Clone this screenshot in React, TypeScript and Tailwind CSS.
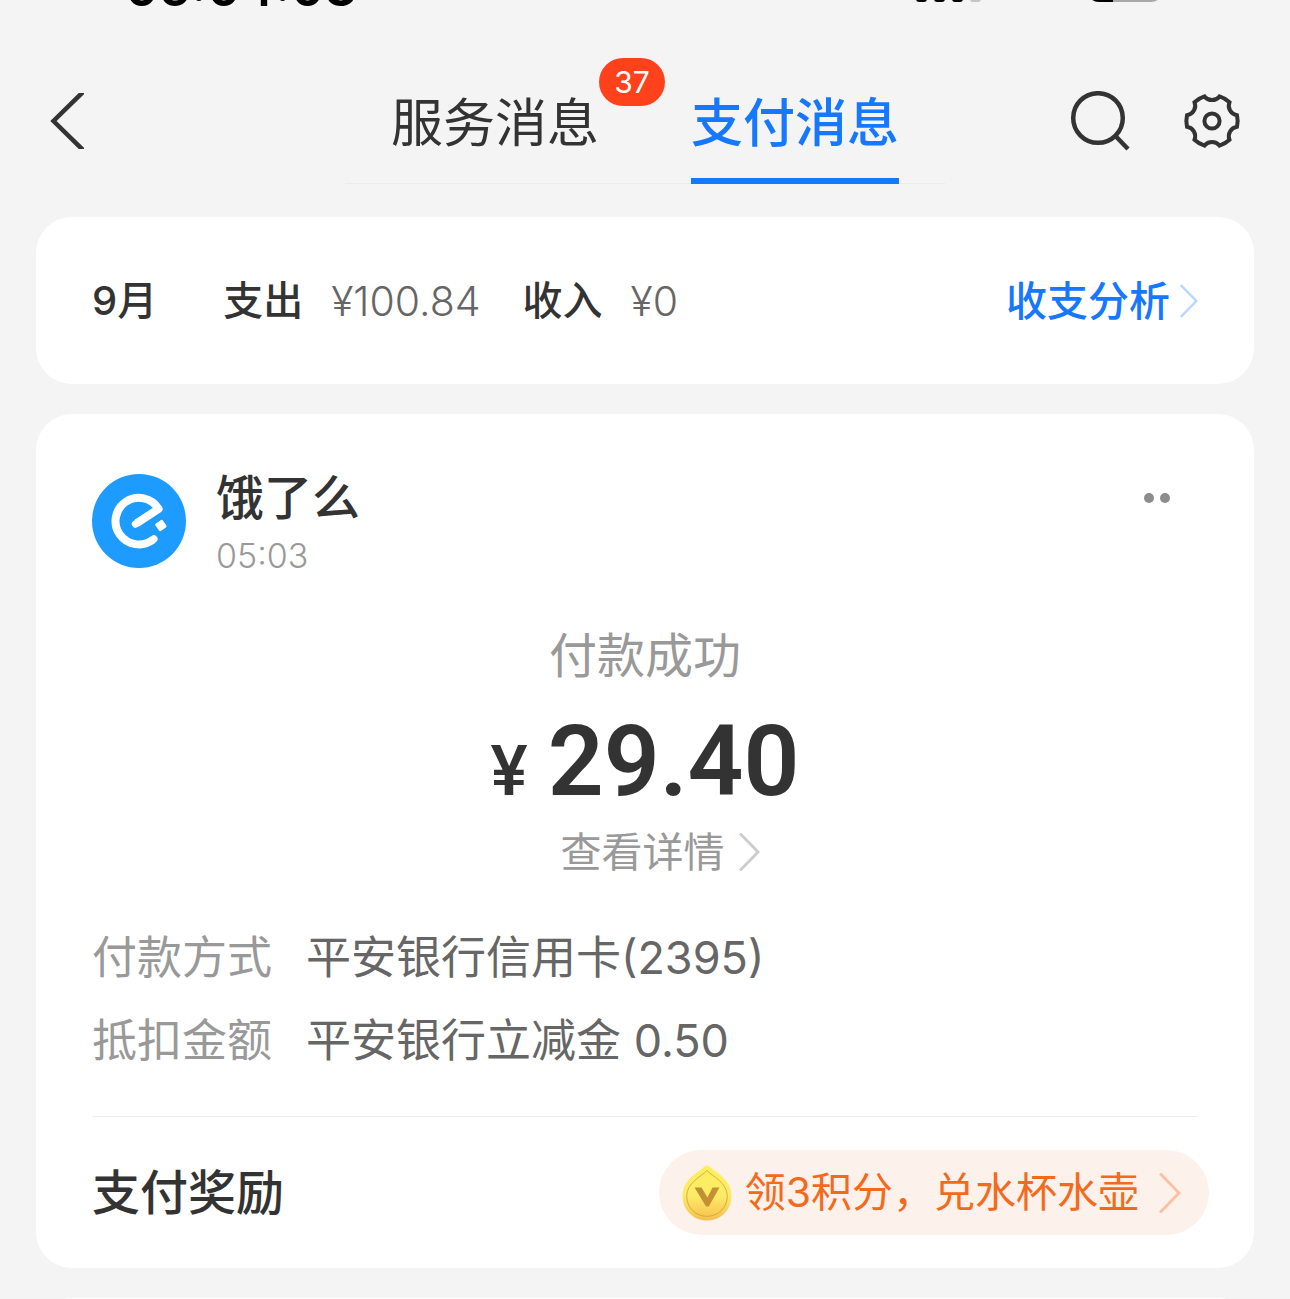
import { useState } from "react";

interface Tab {
  id: string;
  label: string;
  badge?: number;
}

const TABS: Tab[] = [
  { id: "service", label: "服务消息", badge: 37 },
  { id: "payment", label: "支付消息" },
];

const DETAILS = [
  { label: "付款方式", value: "平安银行信用卡(2395)" },
  { label: "抵扣金额", value: "平安银行立减金 0.50" },
];

function Chevron({ className }: { className: string }) {
  return (
    <svg viewBox="0 0 22 40" fill="none" className={className} aria-hidden="true">
      <path d="M1 0.5L20 20L1 39.5" stroke="currentColor" strokeWidth="3" />
    </svg>
  );
}

function BackIcon() {
  return (
    <svg viewBox="0 0 34 56" fill="none" className="h-14 w-[34px]">
      <path d="M36 -4L3.5 28L36 60" stroke="currentColor" strokeWidth="4.5" />
    </svg>
  );
}

function SearchIcon() {
  return (
    <svg viewBox="0 0 60 60" fill="none" className="size-[60px]">
      <circle cx="28" cy="27" r="24.8" stroke="currentColor" strokeWidth="4.5" />
      <path d="M45.5 45L58 58" stroke="currentColor" strokeWidth="4.5" />
    </svg>
  );
}

function GearIcon() {
  return (
    <svg viewBox="0 0 60 60" fill="none" className="size-[60px]">
      <path
        d="M37.5 5.4A25.7 25.7 0 0 1 47.5 11.2A9.5 9.5 0 0 0 55 24.2A25.7 25.7 0 0 1 55 35.8A9.5 9.5 0 0 0 47.5 48.8A25.7 25.7 0 0 1 37.5 54.6A9.5 9.5 0 0 0 22.5 54.6A25.7 25.7 0 0 1 12.5 48.8A9.5 9.5 0 0 0 5 35.8A25.7 25.7 0 0 1 5 24.2A9.5 9.5 0 0 0 12.5 11.2A25.7 25.7 0 0 1 22.5 5.4A9.5 9.5 0 0 0 37.5 5.4Z"
        stroke="currentColor"
        strokeWidth="4"
      />
      <circle cx="30" cy="30" r="7.6" stroke="currentColor" strokeWidth="4" />
    </svg>
  );
}

function MerchantLogo() {
  return (
    <svg viewBox="0 0 94 94" fill="none" className="size-[94px] shrink-0" role="img" aria-label="饿了么">
      <circle cx="47" cy="47" r="47" fill="#1e9bff" />
      <path
        d="M44.8 49.2L66.6 34.8A23.3 23.3 0 1 0 61 65.6"
        stroke="#fff"
        strokeWidth="8"
        strokeLinejoin="round"
      />
      <path d="M43.6 50L46 48.4M60.4 66L61.8 65" stroke="#fff" strokeWidth="7.5" strokeLinecap="round" />
      <rect x="64.4" y="47" width="9" height="9" rx="1.6" fill="#fff" transform="rotate(-36 68.9 51.5)" />
    </svg>
  );
}

function CoinIcon() {
  return (
    <svg viewBox="0 0 50 56" fill="none" className="h-14 w-[50px]" aria-hidden="true">
      <defs>
        <linearGradient id="coin" x1="0" y1="0" x2="0" y2="1">
          <stop offset="0" stopColor="#fcf05c" />
          <stop offset="0.55" stopColor="#fdea68" />
          <stop offset="1" stopColor="#f6bf4d" />
        </linearGradient>
        <linearGradient id="coin-v" x1="0" y1="0" x2="1" y2="1">
          <stop offset="0" stopColor="#b8913a" />
          <stop offset="1" stopColor="#cf8f2c" />
        </linearGradient>
      </defs>
      <path
        d="M25 0.5C27 0.5 28.5 2.5 31 4.5C37 9 49.5 16 49.5 31C49.5 45 38.500 55.5 25 55.5C11.5 55.5 0.5 45 0.5 31C0.5 16 13 9 19 4.5C21.5 2.5 23 0.5 25 0.5Z"
        fill="url(#coin)"
      />
      <path
        d="M25 5.5C30 11 45.3 17.5 45.3 31C45.3 42.5 36.5 51.3 25 51.3C13.5 51.3 4.7 42.5 4.7 31C4.7 17.5 20 11 25 5.5Z"
        stroke="#c9a23a"
        strokeWidth="0.8"
      />
      <path d="M12.5 22.5H19.500L25.5 32.5L30.5 22.5H37.500L26.800 41.5H24Z" fill="url(#coin-v)" />
    </svg>
  );
}

function StatusBar() {
  return (
    <div className="flex h-2 shrink-0 items-start justify-between overflow-hidden pr-[127px] pl-[125px] text-black">
      <div className="flex h-full items-end">
        <span className="font-[Inter] text-[51px] leading-[40px] font-semibold">05:04:03</span>
      </div>
      <div className="flex h-0.5 items-end overflow-hidden">
        <div className="flex gap-[7px]">
          <span className="h-3 w-[11px] rounded-[3px] bg-black" />
          <span className="h-3 w-[11px] rounded-[3px] bg-black" />
          <span className="h-3 w-[11px] rounded-[3px] bg-black" />
          <span className="h-3 w-[11px] rounded-[3px] bg-[#c4c4c4]" />
        </div>
        <div className="ml-[106px] flex h-9 w-[76px] overflow-hidden rounded-xl bg-[#a8a8a8]">
          <span className="h-full w-[26px] bg-black" />
        </div>
      </div>
    </div>
  );
}

export default function App() {
  const [active, setActive] = useState("payment");

  return (
    <div className="flex h-screen flex-col overflow-hidden bg-[#f4f4f4] font-[Inter,'Noto_Sans_CJK_SC',sans-serif] text-[#333]">
      <StatusBar />

      {/* Header */}
      <header className="grid h-44 shrink-0 grid-cols-[1fr_600px_1fr]">
        <div className="flex items-center pt-[50px] pl-[50px]">
          <button type="button" aria-label="返回">
            <BackIcon />
          </button>
        </div>
        <nav className="flex border-b border-[#ebebeb]">
          {TABS.map((tab) => (
            <button
              key={tab.id}
              type="button"
              onClick={() => setActive(tab.id)}
              className={
                active === tab.id
                  ? "flex flex-1 justify-center font-medium text-[#1677ff]"
                  : "flex flex-1 justify-center"
              }
            >
              <span
                className={
                  active === tab.id
                    ? "relative -mb-px flex h-44 items-center border-b-6 border-[#1677ff] pt-[62px] text-[52px] leading-[60px]"
                    : "relative -mb-px flex h-44 items-center border-b-6 border-transparent pt-[62px] text-[52px] leading-[60px]"
                }
              >
                {tab.label}
                {tab.badge != null && (
                  <span className="absolute top-[50px] left-full flex h-12 w-[66px] items-center justify-center rounded-full bg-[#ff411c] text-[30px] font-normal text-white">
                    {tab.badge}
                  </span>
                )}
              </span>
            </button>
          ))}
        </nav>
        <div className="flex items-center justify-end gap-[52px] pt-[50px] pr-12">
          <button type="button" aria-label="搜索">
            <SearchIcon />
          </button>
          <button type="button" aria-label="设置">
            <GearIcon />
          </button>
        </div>
      </header>

      <main className="flex flex-col gap-[30px] px-9 pt-[33px]">
        {/* Monthly summary */}
        <section className="flex h-[167px] shrink-0 items-center rounded-[36px] bg-white px-14 text-[40px] leading-[60px]">
          <h2 className="mr-[66px] font-medium">9月</h2>
          <dl className="flex">
            <dt className="font-medium">支出</dt>
            <dd className="mr-[42px] ml-7 text-[41px] font-light text-[#666]">¥100.84</dd>
            <dt className="font-medium">收入</dt>
            <dd className="ml-7 text-[41px] font-light text-[#666]">¥0</dd>
          </dl>
          <a href="#analysis" className="ml-auto flex items-center gap-2.5 text-[41px] font-medium text-[#1677ff]">
            收支分析
            <Chevron className="h-[34px] w-[18px] text-[#b9d6ff]" />
          </a>
        </section>

        {/* Payment message */}
        <article className="shrink-0 rounded-[36px] bg-white px-14 pt-[60px]">
          <div className="flex items-start">
            <MerchantLogo />
            <div className="ml-[30px]">
              <h3 className="text-[48px] leading-[48px] font-medium">饿了么</h3>
              <p className="mt-3.5 text-[34px] leading-10 font-light text-[#999]">05:03</p>
            </div>
            <button type="button" aria-label="更多" className="mr-7 ml-auto flex h-12 items-center gap-1.5">
              <span className="size-2.5 rounded-full bg-[#8c8c8c]" />
              <span className="size-2.5 rounded-full bg-[#8c8c8c]" />
            </button>
          </div>

          <div className="mt-[52px] flex flex-col items-center">
            <p className="text-[48px] leading-[56px] text-[#999]">付款成功</p>
            <p className="mt-7 flex items-baseline gap-5 font-[Roboto]">
              <span className="text-[70px] leading-none font-medium">¥</span>
              <span className="text-[98px] leading-[100px] font-semibold">29.40</span>
            </p>
            <a
              href="#detail"
              className="mt-4 flex items-center gap-3.5 pl-[30px] text-[41px] leading-[48px] text-[#999]"
            >
              查看详情
              <Chevron className="h-[38px] w-[21px] text-[#ccc]" />
            </a>
          </div>

          <dl className="mt-[52px] grid grid-cols-[auto_1fr] gap-x-[34px] gap-y-[23px] text-[45px] leading-[60px]">
            {DETAILS.map((row) => (
              <div key={row.label} className="contents">
                <dt className="text-[#999]">{row.label}</dt>
                <dd className="text-[#666]">{row.value}</dd>
              </div>
            ))}
          </dl>

          <div className="mt-[45px] flex h-[152px] items-center justify-between border-t border-[#eee]">
            <h4 className="text-[48px] font-medium">支付奖励</h4>
            <a
              href="#reward"
              className="-mr-[11px] flex h-[85px] items-center rounded-full bg-[#fdf1eb] pr-7 pl-[23px] text-[41px] text-[#f36a1d]"
            >
              <CoinIcon />
              <span className="mr-5 ml-[13px]">领3积分，兑水杯水壶</span>
              <Chevron className="h-10 w-[22px] text-[#fac2a2]" />
            </a>
          </div>
        </article>

        {/* Next message */}
        <article className="h-[400px] shrink-0 rounded-[36px] bg-white" />
      </main>
    </div>
  );
}
